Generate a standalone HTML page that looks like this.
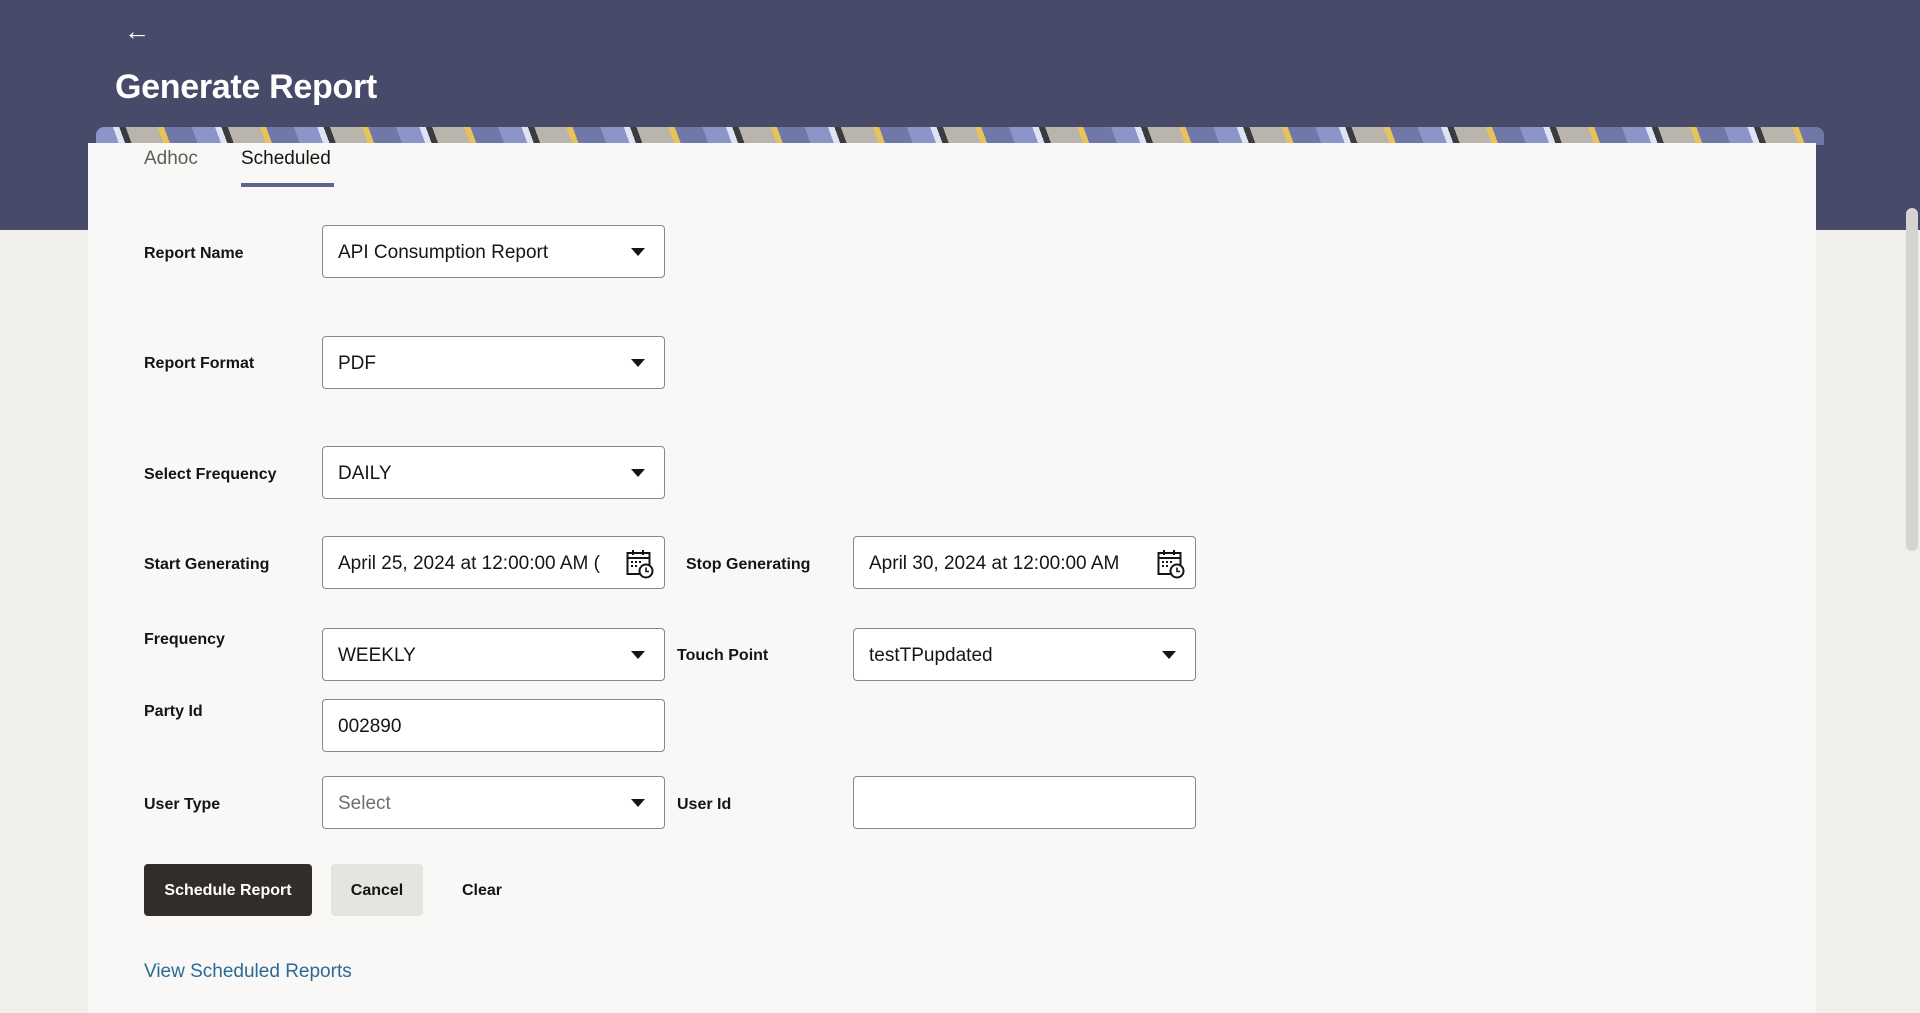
<!DOCTYPE html>
<html><head><meta charset="utf-8"><style>
*{box-sizing:border-box;margin:0;padding:0}
body{width:1920px;height:1003px;overflow:hidden;background:#f1efec;font-family:"Liberation Sans",sans-serif;position:relative;color:#161513}
.hdr{position:absolute;left:0;top:0;width:1920px;height:230px;background:#474b69}
.back{position:absolute;left:124px;top:16px;color:#fff;font-size:26px}
.title{position:absolute;left:115px;top:68px;color:#fff;font-size:34px;font-weight:bold;letter-spacing:-0.3px}
.band{position:absolute;left:96px;top:127px;width:1728px;height:18px;border-radius:8px 8px 0 0;background:repeating-linear-gradient(70deg,#8b95c7 0 22px,#dfe4f5 22px 28px,#3b3b3f 28px 34px,#b9b4ac 34px 64px,#e8c25a 64px 70px,#6f78a6 70px 96px)}
.card{position:absolute;left:88px;top:143px;width:1728px;height:870px;background:#f9f8f6}
.tab{position:absolute;top:148px;font-size:19px}
.ul{position:absolute;left:241px;top:183px;width:93px;height:4px;background:#5e6589}
.lbl{position:absolute;font-size:16px;font-weight:bold;color:#161513}
.in{position:absolute;width:343px;height:53px;border:1px solid #8a8886;border-radius:4px;background:#fff;font-size:19px;padding-left:15px;line-height:54px;color:#161513;white-space:nowrap;overflow:hidden}
.dd::after{content:"";position:absolute;right:19px;top:22px;border-left:7px solid transparent;border-right:7px solid transparent;border-top:8px solid #161513}
.cal{position:absolute;right:10px;top:12px}
.btn{position:absolute;top:864px;height:52px;border-radius:4px;font-size:16px;font-weight:bold;line-height:54px;text-align:center}
.sb{position:absolute;right:2px;top:208px;width:12px;height:343px;background:#d6d4d1;border-radius:6px}
</style></head><body>
<div class="hdr"></div>
<div class="back">&#8592;</div>
<div class="title">Generate Report</div>
<div class="band"></div>
<div class="card"></div>
<div class="sb"></div>
<div class="tab" style="left:144px;color:#5f5e5b">Adhoc</div>
<div class="tab" style="left:241px">Scheduled</div>
<div class="ul"></div>

<div class="lbl" style="left:144px;top:245px">Report Name</div>
<div class="in dd" style="left:322px;top:225px">API Consumption Report</div>
<div class="lbl" style="left:144px;top:355px">Report Format</div>
<div class="in dd" style="left:322px;top:336px">PDF</div>
<div class="lbl" style="left:144px;top:466px">Select Frequency</div>
<div class="in dd" style="left:322px;top:446px">DAILY</div>

<div class="lbl" style="left:144px;top:556px">Start Generating</div>
<div class="in" style="left:322px;top:536px">April 25, 2024 at 12:00:00 AM (
<svg class="cal" width="28" height="30" viewBox="0 0 28 30"><rect x="1.5" y="4" width="22" height="21" fill="none" stroke="#161513" stroke-width="2"/><line x1="1.5" y1="9" x2="23.5" y2="9" stroke="#161513" stroke-width="2"/><line x1="7" y1="1" x2="7" y2="6" stroke="#161513" stroke-width="2"/><line x1="17" y1="1" x2="17" y2="6" stroke="#161513" stroke-width="2"/><g fill="#161513"><rect x="5" y="12" width="2" height="2"/><rect x="9" y="12" width="2" height="2"/><rect x="13" y="12" width="2" height="2"/><rect x="5" y="16" width="2" height="2"/><rect x="9" y="16" width="2" height="2"/></g><circle cx="20" cy="22" r="6.5" fill="#fff" stroke="#161513" stroke-width="2"/><path d="M20 18.5v4h3" fill="none" stroke="#161513" stroke-width="1.6"/></svg></div>
<div class="lbl" style="left:686px;top:556px">Stop Generating</div>
<div class="in" style="left:853px;top:536px">April 30, 2024 at 12:00:00 AM
<svg class="cal" width="28" height="30" viewBox="0 0 28 30"><rect x="1.5" y="4" width="22" height="21" fill="none" stroke="#161513" stroke-width="2"/><line x1="1.5" y1="9" x2="23.5" y2="9" stroke="#161513" stroke-width="2"/><line x1="7" y1="1" x2="7" y2="6" stroke="#161513" stroke-width="2"/><line x1="17" y1="1" x2="17" y2="6" stroke="#161513" stroke-width="2"/><g fill="#161513"><rect x="5" y="12" width="2" height="2"/><rect x="9" y="12" width="2" height="2"/><rect x="13" y="12" width="2" height="2"/><rect x="5" y="16" width="2" height="2"/><rect x="9" y="16" width="2" height="2"/></g><circle cx="20" cy="22" r="6.5" fill="#fff" stroke="#161513" stroke-width="2"/><path d="M20 18.5v4h3" fill="none" stroke="#161513" stroke-width="1.6"/></svg></div>

<div class="lbl" style="left:144px;top:631px">Frequency</div>
<div class="in dd" style="left:322px;top:628px">WEEKLY</div>
<div class="lbl" style="left:677px;top:647px">Touch Point</div>
<div class="in dd" style="left:853px;top:628px">testTPupdated</div>

<div class="lbl" style="left:144px;top:703px">Party Id</div>
<div class="in" style="left:322px;top:699px">002890</div>

<div class="lbl" style="left:144px;top:796px">User Type</div>
<div class="in dd" style="left:322px;top:776px;color:#6f6e6b">Select</div>
<div class="lbl" style="left:677px;top:796px">User Id</div>
<div class="in" style="left:853px;top:776px"></div>

<div class="btn" style="left:144px;width:168px;background:#312d2a;color:#fff">Schedule Report</div>
<div class="btn" style="left:331px;width:92px;background:#e6e4e1;color:#161513">Cancel</div>
<div class="btn" style="left:452px;width:60px;color:#161513">Clear</div>
<div style="position:absolute;left:144px;top:961px;font-size:19px;color:#2b6a95">View Scheduled Reports</div>
</body></html>
